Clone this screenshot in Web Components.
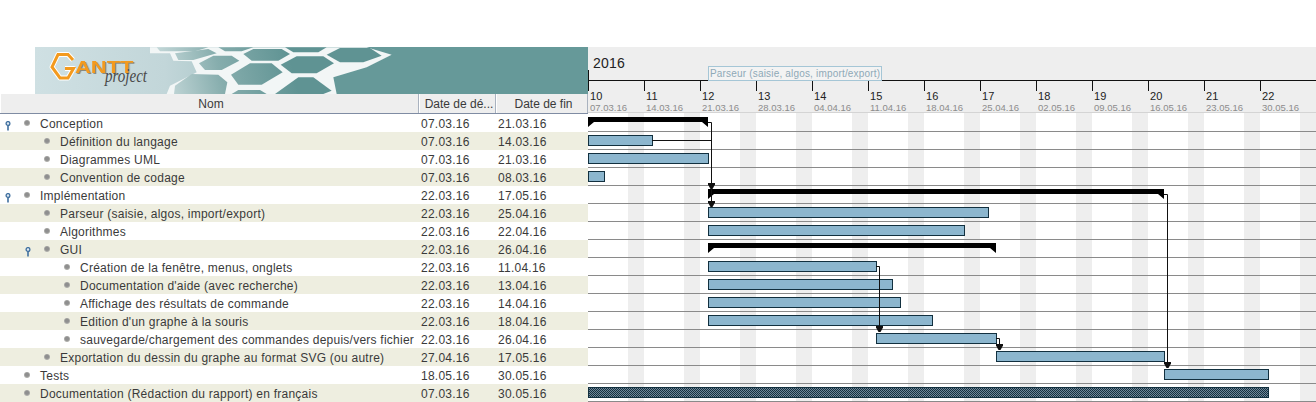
<!DOCTYPE html>
<html>
<head>
<meta charset="utf-8">
<style>
  html, body { margin: 0; padding: 0; background: #fff; }
  body { font-family: "Liberation Sans", Arial, sans-serif; overflow: hidden; }
</style>
</head>
<body>
<gantt-app></gantt-app>
<script>
const TASKS = [
  { name: "Conception", level: 0, open: true, start: "07.03.16", end: "21.03.16" },
  { name: "Définition du langage", level: 1, start: "07.03.16", end: "14.03.16" },
  { name: "Diagrammes UML", level: 1, start: "07.03.16", end: "21.03.16" },
  { name: "Convention de codage", level: 1, start: "07.03.16", end: "08.03.16" },
  { name: "Implémentation", level: 0, open: true, start: "22.03.16", end: "17.05.16" },
  { name: "Parseur (saisie, algos, import/export)", level: 1, start: "22.03.16", end: "25.04.16" },
  { name: "Algorithmes", level: 1, start: "22.03.16", end: "22.04.16" },
  { name: "GUI", level: 1, open: true, start: "22.03.16", end: "26.04.16" },
  { name: "Création de la fenêtre, menus, onglets", level: 2, start: "22.03.16", end: "11.04.16" },
  { name: "Documentation d'aide (avec recherche)", level: 2, start: "22.03.16", end: "13.04.16" },
  { name: "Affichage des résultats de commande", level: 2, start: "22.03.16", end: "14.04.16" },
  { name: "Edition d'un graphe à la souris", level: 2, start: "22.03.16", end: "18.04.16" },
  { name: "sauvegarde/chargement des commandes depuis/vers fichier", level: 2, start: "22.03.16", end: "26.04.16" },
  { name: "Exportation du dessin du graphe au format SVG (ou autre)", level: 1, start: "27.04.16", end: "17.05.16" },
  { name: "Tests", level: 0, start: "18.05.16", end: "30.05.16" },
  { name: "Documentation (Rédaction du rapport) en français", level: 0, start: "07.03.16", end: "30.05.16" },
];

const WEEKS = [
  [10, "07.03.16"], [11, "14.03.16"], [12, "21.03.16"], [13, "28.03.16"], [14, "04.04.16"],
  [15, "11.04.16"], [16, "18.04.16"], [17, "25.04.16"], [18, "02.05.16"], [19, "09.05.16"],
  [20, "16.05.16"], [21, "23.05.16"], [22, "30.05.16"],
];

const ROW_H = 18;

// x positions are relative to the left edge of the chart
const BARS = [
  { row: 1, x: 0, w: 64 }, { row: 2, x: 0, w: 120 }, { row: 3, x: 0, w: 16 },
  { row: 5, x: 120, w: 280 }, { row: 6, x: 120, w: 256 },
  { row: 8, x: 120, w: 168 }, { row: 9, x: 120, w: 184 }, { row: 10, x: 120, w: 192 },
  { row: 11, x: 120, w: 224 }, { row: 12, x: 288, w: 120 }, { row: 13, x: 408, w: 168 },
  { row: 14, x: 576, w: 104 },
];
const SUMMARIES = [
  { row: 0, x: 0, w: 120 }, { row: 4, x: 120, w: 456 }, { row: 7, x: 120, w: 288 },
];

class TaskRow extends HTMLElement {
  constructor() {
    super();
    this.attachShadow({ mode: "open" });
  }

  connectedCallback() {
    const level = parseInt(this.getAttribute("level")) || 0;
    const pin = this.hasAttribute("open") ? `
      <svg class="pin" width="8" height="10" viewBox="0 0 8 10">
        <circle cx="4" cy="2.5" r="1.9" fill="#dfe9f2" stroke="#3f6f9f" stroke-width="1.3"/>
        <path d="M4 4.5V9.5" stroke="#3f6f9f" stroke-width="1.6"/>
      </svg>` : "";
    this.shadowRoot.innerHTML = `
      <style>
        :host { display: grid; grid-template-columns: 419px 77px 92px; height: ${ROW_H}px; line-height: 20px;
          font-size: 12px; letter-spacing: .24px; color: #3a3a3a; background: #fff; white-space: nowrap; }
        :host(:nth-child(even)) { background: #eeeee0; }
        .name { position: relative; padding-left: ${40 + level * 20}px; }
        .dot { position: absolute; left: ${24 + level * 20}px; top: 6px; width: 6px; height: 6px; border-radius: 50%;
          background: radial-gradient(circle at 50% 45%, #8f8f8f 0 35%, #b9b9b4 75%, #d8d8d4 100%); }
        .pin { position: absolute; left: ${4 + level * 20}px; top: 7px; }
        .date { padding-left: 2px; }
      </style>
      <div class="name">${pin}<span class="dot"></span><slot></slot></div>
      <div class="date">${this.getAttribute("start")}</div>
      <div class="date">${this.getAttribute("end")}</div>`;
  }
}

class TaskTable extends HTMLElement {
  constructor() {
    super();
    this.attachShadow({ mode: "open" });
    this.shadowRoot.innerHTML = `
      <style>
        :host { display: block; width: 588px; }
        .head { display: grid; grid-template-columns: 419px 77px 92px; height: 20px; box-sizing: border-box;
          background: #eeeeee; border-bottom: 1px solid #7f8ca3; font-size: 12px; color: #3a3a3a; }
        .head div { text-align: center; line-height: 21px; padding-left: 3px; border-right: 1px solid #a9b2bf; border-left: 1px solid #fff;
          height: 19px; box-sizing: border-box; overflow: hidden; white-space: nowrap; }
        .rows { display: block; }
      </style>
      <div class="head"><div>Nom</div><div>Date de dé...</div><div>Date de fin</div></div>
      <div class="rows"></div>`;
    const rows = this.shadowRoot.querySelector(".rows");
    TASKS.forEach((t) => {
      const row = document.createElement("task-row");
      row.setAttribute("level", t.level);
      row.setAttribute("start", t.start);
      row.setAttribute("end", t.end);
      if (t.open) row.setAttribute("open", "");
      row.textContent = t.name;
      rows.appendChild(row);
    });
  }
}

class GanttLogo extends HTMLElement {
  constructor() {
    super();
    this.attachShadow({ mode: "open" });
    // honeycomb cells, in 3x coordinates of the banner's right part
    const cells = [
      "20,10 175,10 135,22 30,22",
      "205,10 310,10 275,22 225,22",
      "405,10 530,10 505,25 430,25",
      "75,28 175,15 200,28 130,48 85,48",
      "147,58 190,35 245,35 268,50 215,78 165,78",
      "280,30 310,15 395,15 420,30 385,50 305,50",
      "243,92 300,58 365,58 398,85 335,122 265,122",
      "392,62 440,37 520,37 552,58 500,88 425,88",
      "530,32 570,12 660,12 695,35 640,55 570,55",
      "72,150 75,125 125,90 205,92 232,115 225,150",
      "375,150 445,100 490,100 545,140 520,150",
      "245,150 265,138 330,138 350,150",
    ];
    const mark = "38,13 33,7.5 23,7.5 17,20 25,31 33,31 38.5,21.5 30,21.5";
    this.shadowRoot.innerHTML = `
      <style>
        :host { display: block; height: 47px; padding-left: 35px; }
        svg { display: block; }
        .antt { filter: drop-shadow(1px 1px 0 #8a8a80); }
      </style>
      <svg width="553" height="47" viewBox="0 0 553 47">
        <defs>
          <linearGradient id="bg" x1="0" x2="200" y1="0" y2="0" gradientUnits="userSpaceOnUse">
            <stop offset="0" stop-color="#cfe0e3"/><stop offset=".65" stop-color="#c2d6d9"/>
            <stop offset="1" stop-color="#a9c6c8"/>
          </linearGradient>
          <linearGradient id="cell" x1="40" x2="420" y1="130" y2="40" gradientUnits="userSpaceOnUse">
            <stop offset="0" stop-color="#c6d9da"/><stop offset=".45" stop-color="#86adad"/>
            <stop offset="1" stop-color="#5f9393"/>
          </linearGradient>
        </defs>
        <rect width="553" height="47" fill="#669999"/>
        <rect width="200" height="47" fill="url(#bg)"/>
        <g transform="translate(115,-3) scale(.33333)">
          <polygon points="0,28 60,28 70,50 125,52 140,85 60,125 50,150 560,150 550,100 650,70 725,32 650,10 0,10" fill="#f2f6f6"/>
          ${cells.map((p) => `<polygon points="${p}" fill="url(#cell)"/>`).join("")}
        </g>
        <polyline points="${mark}" fill="none" stroke="#fff" stroke-width="5" stroke-linejoin="round"/>
        <polyline points="${mark}" fill="none" stroke="#f39a1e" stroke-width="3"/>
        <text class="antt" transform="translate(40,26) scale(1.29,1)" font-family="Liberation Sans" font-weight="700" font-size="17" fill="#f39a1e">ANTT</text>
        <text x="70" y="35" font-family="Liberation Serif" font-style="italic" font-size="18" textLength="42" lengthAdjust="spacingAndGlyphs" fill="#4a4a4a">project</text>
      </svg>`;
  }
}

class GanttChart extends HTMLElement {
  constructor() {
    super();
    this.attachShadow({ mode: "open" });
    const H = TASKS.length * ROW_H;
    let s = "";
    // weekend stripes
    for (let i = 0; i < 13; i++) {
      s += `<rect x="${40 + i * 56}" y="-1" width="16" height="${H + 1}" fill="#eeeeee"/>`;
    }
    // row lines
    for (let i = 0; i < TASKS.length; i++) {
      s += `<rect x="0" y="${17 + i * ROW_H}" width="728" height="1" fill="#8a8a8a"/>`;
    }
    BARS.forEach((b) => {
      s += `<rect x="${b.x + .5}" y="${b.row * ROW_H + 3.5}" width="${b.w}" height="10" fill="#8cb6ce" stroke="#12303f"/>`;
    });
    // last task: hatched dark bar
    s += `<rect x=".5" y="${15 * ROW_H + 3.5}" width="680" height="10" fill="url(#hatch)" stroke="#12303f"/>`;
    SUMMARIES.forEach((b) => {
      const y = b.row * ROW_H + 3;
      const r = b.x + b.w;
      s += `<path d="M${b.x} ${y}H${r}V${y + 10}L${r - 6} ${y + 5}H${b.x + 6}L${b.x} ${y + 10}Z" fill="#000"/>`;
    });
    // links run over the bars
    const line = (d) => `<path d="${d}" fill="none" stroke="#111" stroke-width="1"/>`;
    const head = (x, y) => `<path d="M${x - 3.5} ${y - 6}h7v1.5l-2.5 4.5h-2l-2.5-4.5z" fill="#111"/>`;
    s += line("M120 8.5H123.5V88") + line("M64 26.5H123.5") + head(123.5, 75) + head(123.5, 93);
    s += line("M576 80.5H579.5V250") + head(579.5, 254);
    s += line("M288 152.5H291.5V214") + head(291.5, 218);
    s += line("M408 224.5H411.5V232") + head(411.5, 236);
    this.shadowRoot.innerHTML = `
      <style>
        :host { display: block; position: relative; width: 728px; background: #fff; }
        .top { height: 66px; background: #eeeeee; position: relative; }
        .year { height: 33px; padding: 8px 0 0 5px; box-sizing: border-box; font-size: 14px; letter-spacing: .2px; color: #222; line-height: 17px; }
        .weeks { display: flex; border-top: 1px solid #111; height: 33px; border-bottom: 1px solid #d4d4d4; box-sizing: border-box; }
        .week { width: 56px; flex: none; box-sizing: border-box; border-left: 1px solid transparent; padding-left: 1px; position: relative; }
        .week::before { content: ""; position: absolute; left: -1px; top: 0; width: 1px; height: 10px; background: #111; }
        .week:first-child::before { top: -11px; height: 21px; }
        .num { font-size: 11px; line-height: 12px; margin-top: 9px; color: #222; letter-spacing: .2px; }
        .date { font-size: 9.5px; line-height: 11px; margin-top: 0; color: #8c8c8c; white-space: nowrap; }
        .tip { position: absolute; left: 120px; top: 19px; width: 174px; height: 15px; box-sizing: border-box;
          border: 1px solid #a5c6d6; background: #f3f3f3; color: #8fa9b7; font-size: 10px; line-height: 14px;
          padding-left: 1px; letter-spacing: .18px; white-space: nowrap; }
        svg { display: block; }
      </style>
      <div class="top">
        <div class="year">2016</div>
        <div class="weeks">${WEEKS.map(([n, d]) => `<div class="week"><div class="num">${n}</div><div class="date">${d}</div></div>`).join("")}</div>
        <div class="tip">Parseur (saisie, algos, import/export)</div>
      </div>
      <svg width="728" height="${H + 1}" viewBox="0 -1 728 ${H + 1}">
        <defs>
          <pattern id="hatch" width="2" height="2" patternUnits="userSpaceOnUse">
            <rect width="2" height="2" fill="#6d8799"/>
            <rect width="1" height="1" fill="#17303f"/><rect x="1" y="1" width="1" height="1" fill="#17303f"/>
          </pattern>
        </defs>
        ${s}
      </svg>`;
  }
}

class GanttApp extends HTMLElement {
  constructor() {
    super();
    this.attachShadow({ mode: "open" });
    this.shadowRoot.innerHTML = `
      <style>
        :host { display: flex; padding-top: 47px; width: 1316px; height: 402px; box-sizing: border-box; overflow: hidden; }
        .left { width: 588px; flex: none; }
      </style>
      <div class="left"><gantt-logo></gantt-logo><task-table></task-table></div>
      <gantt-chart></gantt-chart>`;
  }
}

customElements.define("task-row", TaskRow);
customElements.define("task-table", TaskTable);
customElements.define("gantt-logo", GanttLogo);
customElements.define("gantt-chart", GanttChart);
customElements.define("gantt-app", GanttApp);
</script>
</body>
</html>
